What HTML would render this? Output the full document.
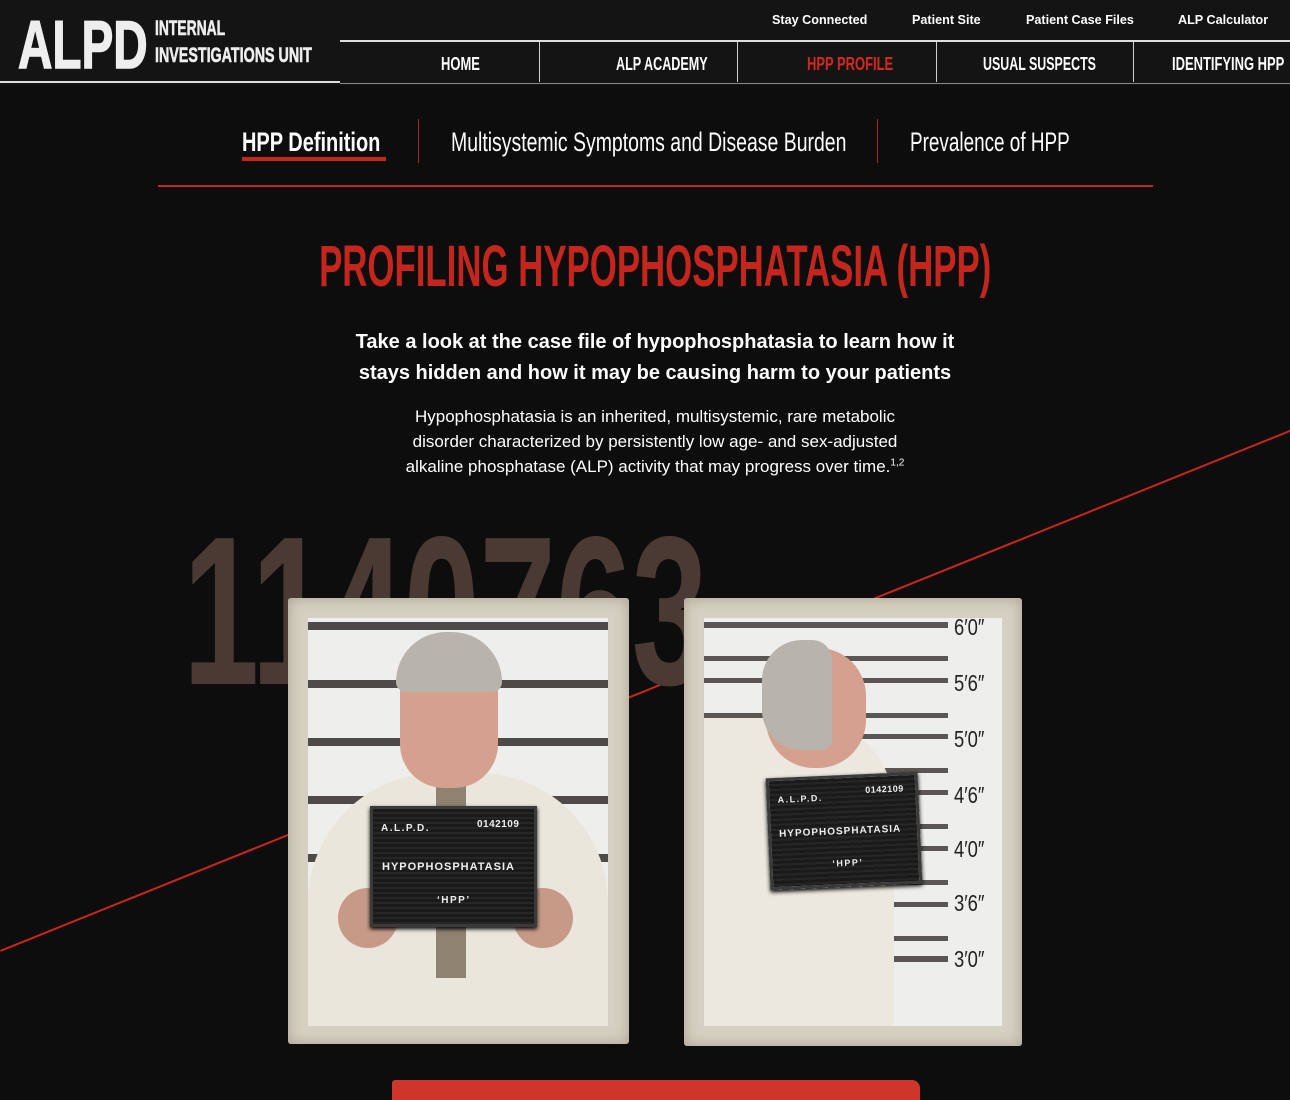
<!DOCTYPE html>
<html><head><meta charset="utf-8"><style>
*{margin:0;padding:0;box-sizing:border-box}
body{width:1290px;height:1090px;overflow:hidden;background:#0d0d0d;font-family:"Liberation Sans",sans-serif;color:#fff;position:relative}
.a{position:absolute;white-space:nowrap}
.s{display:inline-block;transform-origin:left center}
.cc{position:absolute;left:10px;width:1290px;text-align:center;white-space:nowrap}
.cc span{display:inline-block;transform-origin:center}
.nav{font-weight:bold;font-size:18px;top:54px}
.sep{position:absolute;width:1px;background:#cfcfcf}
.frame{position:absolute;background:#d6d0c2;box-shadow:inset 0 0 14px #a9a190;border-radius:3px}
.inner{position:absolute;overflow:hidden;background:#eeeeec}
.sign{position:absolute;background:repeating-linear-gradient(#1a1a1a 0 3px,#262626 3px 5px);border:3px solid #3a3a3a;box-shadow:0 2px 4px #000;color:#eee;font-weight:bold}
.sign div{position:absolute;white-space:nowrap}
.ht{position:absolute;left:250px;font-size:23px;color:#222;transform:scaleX(.8);transform-origin:left}
</style></head><body>
<!-- header -->
<div class="a" style="left:0;top:0;width:1290px;height:85px;background:#141414"></div>
<div class="a" style="left:0;top:81px;width:340px;height:2px;background:#ddd"></div>
<div class="a" style="left:340px;top:40px;width:950px;height:2px;background:#ddd"></div>
<div class="a" style="left:340px;top:83px;width:950px;height:1px;background:#888"></div>
<div class="a" style="left:18px;top:6px;font-size:68px;font-weight:bold;color:#eee;-webkit-text-stroke:1.5px #eee"><span class="s" style="transform:scaleX(.7)">ALPD</span></div>
<div class="a" style="left:155px;top:17px;font-size:21px;font-weight:bold;color:#eee;-webkit-text-stroke:.6px #eee"><span class="s" style="transform:scaleX(.66)">INTERNAL</span></div>
<div class="a" style="left:155px;top:44px;font-size:21px;font-weight:bold;color:#eee;-webkit-text-stroke:.6px #eee"><span class="s" style="transform:scaleX(.68)">INVESTIGATIONS UNIT</span></div>
<div class="a" style="left:772px;top:12px;font-size:13px;font-weight:bold"><span class="s" style="transform:scaleX(.97)">Stay Connected</span></div>
<div class="a" style="left:912px;top:12px;font-size:13px;font-weight:bold"><span class="s" style="transform:scaleX(.97)">Patient Site</span></div>
<div class="a" style="left:1026px;top:12px;font-size:13px;font-weight:bold"><span class="s" style="transform:scaleX(.97)">Patient Case Files</span></div>
<div class="a" style="left:1178px;top:12px;font-size:13px;font-weight:bold"><span class="s" style="transform:scaleX(.97)">ALP Calculator</span></div>
<div class="sep" style="left:539px;top:42px;height:40px"></div>
<div class="sep" style="left:737px;top:42px;height:40px"></div>
<div class="sep" style="left:936px;top:42px;height:40px"></div>
<div class="sep" style="left:1133px;top:42px;height:40px"></div>
<div class="a nav" style="left:441px"><span class="s" style="transform:scaleX(.72)">HOME</span></div>
<div class="a nav" style="left:616px"><span class="s" style="transform:scaleX(.7)">ALP ACADEMY</span></div>
<div class="a nav" style="left:807px;color:#d4281e"><span class="s" style="transform:scaleX(.72)">HPP PROFILE</span></div>
<div class="a nav" style="left:983px"><span class="s" style="transform:scaleX(.69)">USUAL SUSPECTS</span></div>
<div class="a nav" style="left:1172px"><span class="s" style="transform:scaleX(.72)">IDENTIFYING HPP</span></div>
<!-- subnav -->
<div class="a" style="left:242px;top:127px;font-size:27px;font-weight:bold"><span class="s" style="transform:scaleX(.74)">HPP Definition</span></div>
<div class="a" style="left:242px;top:157px;width:144px;height:4px;background:#c8261d"></div>
<div class="sep" style="left:418px;top:119px;height:44px;background:#b3221a"></div>
<div class="a" style="left:451px;top:127px;font-size:27px"><span class="s" style="transform:scaleX(.72)">Multisystemic Symptoms and Disease Burden</span></div>
<div class="sep" style="left:877px;top:119px;height:44px;background:#b3221a"></div>
<div class="a" style="left:910px;top:127px;font-size:27px"><span class="s" style="transform:scaleX(.7)">Prevalence of HPP</span></div>
<div class="a" style="left:158px;top:185px;width:995px;height:2px;background:#c8261d"></div>
<!-- title -->
<div class="cc" style="top:233px;font-size:58px;font-weight:bold;color:#c4261e"><span style="transform:scaleX(.6)">PROFILING HYPOPHOSPHATASIA (HPP)</span></div>
<div class="cc" style="top:331px;font-size:20px;font-weight:bold"><span style="transform:scaleX(1.0)">Take a look at the case file of hypophosphatasia to learn how it</span></div>
<div class="cc" style="top:362px;font-size:20px;font-weight:bold"><span style="transform:scaleX(1.0)">stays hidden and how it may be causing harm to your patients</span></div>
<div class="cc" style="top:407px;font-size:17px"><span style="transform:scaleX(1.0)">Hypophosphatasia is an inherited, multisystemic, rare metabolic</span></div>
<div class="cc" style="top:432px;font-size:17px"><span style="transform:scaleX(1.0)">disorder characterized by persistently low age- and sex-adjusted</span></div>
<div class="cc" style="top:457px;font-size:17px"><span style="transform:scaleX(1.0)">alkaline phosphatase (ALP) activity that may progress over time.<sup style="font-size:10px">1,2</sup></span></div>
<!-- red diagonal -->
<div class="a" style="left:0;top:950px;width:1391px;height:2px;background:#c8261d;transform-origin:0 0;transform:rotate(-21.96deg)"></div>
<!-- big number -->
<div class="a" style="left:183px;top:505px;font-size:212px;font-weight:bold;color:#4a3a33;line-height:1"><span class="s" style="transform:scaleX(.645)">1140763</span></div>
<!-- left photo -->
<div class="frame" style="left:288px;top:598px;width:341px;height:446px"></div>
<div class="inner" style="left:308px;top:618px;width:300px;height:408px;background:repeating-linear-gradient(#eeeeec 0 4px,#4d4a48 4px 12px,#eeeeec 12px 58px)">
 <div class="a" style="left:0;top:155px;width:300px;height:260px;background:#ebe6dc;border-radius:130px 130px 0 0"></div>
 <div class="a" style="left:128px;top:160px;width:30px;height:200px;background:#8f8270"></div>
 <div class="a" style="left:92px;top:20px;width:98px;height:150px;background:#d5a08e;border-radius:48px 48px 44px 44px"></div>
 <div class="a" style="left:88px;top:14px;width:106px;height:60px;background:#b8b4ad;border-radius:50px 50px 10px 10px"></div>
 <div class="a" style="left:30px;top:270px;width:60px;height:60px;background:#c79a87;border-radius:30px"></div>
 <div class="a" style="left:205px;top:270px;width:60px;height:60px;background:#c79a87;border-radius:30px"></div>
</div>
<div class="sign" style="left:370px;top:806px;width:167px;height:121px">
 <div style="left:8px;top:14px;font-size:10px;letter-spacing:1.5px">A.L.P.D.</div>
 <div style="left:104px;top:10px;font-size:10px;letter-spacing:.5px">0142109</div>
 <div style="left:9px;top:52px;font-size:11px;letter-spacing:1px">HYPOPHOSPHATASIA</div>
 <div style="left:64px;top:86px;font-size:10px;letter-spacing:1.5px">‘HPP’</div>
</div>
<!-- right photo -->
<div class="frame" style="left:684px;top:598px;width:338px;height:448px"></div>
<div class="inner" style="left:704px;top:618px;width:298px;height:408px;background:#eeeeec">
 <div class="a" style="left:0;top:4px;width:244px;height:6px;background:#5a5654"></div>
 <div class="a" style="left:0;top:38px;width:244px;height:5px;background:#5a5654"></div>
 <div class="a" style="left:0;top:60px;width:244px;height:5px;background:#5a5654"></div>
 <div class="a" style="left:0;top:95px;width:244px;height:5px;background:#5a5654"></div>
 <div class="a" style="left:0;top:116px;width:244px;height:5px;background:#5a5654"></div>
 <div class="a" style="left:0;top:150px;width:244px;height:5px;background:#5a5654"></div>
 <div class="a" style="left:0;top:172px;width:244px;height:5px;background:#5a5654"></div>
 <div class="a" style="left:0;top:206px;width:244px;height:5px;background:#5a5654"></div>
 <div class="a" style="left:0;top:228px;width:244px;height:5px;background:#5a5654"></div>
 <div class="a" style="left:0;top:262px;width:244px;height:5px;background:#5a5654"></div>
 <div class="a" style="left:0;top:284px;width:244px;height:5px;background:#5a5654"></div>
 <div class="a" style="left:0;top:318px;width:244px;height:5px;background:#5a5654"></div>
 <div class="a" style="left:0;top:338px;width:244px;height:6px;background:#5a5654"></div>
 <div class="a" style="left:0;top:100px;width:190px;height:320px;background:#ece8e0;border-radius:0 90px 0 0"></div>
 <div class="a" style="left:62px;top:30px;width:100px;height:120px;background:#d5a08e;border-radius:48px"></div>
 <div class="a" style="left:58px;top:22px;width:70px;height:110px;background:#b8b4ad;border-radius:40px 20px 10px 40px"></div>
 <div class="ht" style="top:-4px">6′0″</div><div class="ht" style="top:52px">5′6″</div>
 <div class="ht" style="top:108px">5′0″</div><div class="ht" style="top:164px">4′6″</div>
 <div class="ht" style="top:218px">4′0″</div><div class="ht" style="top:272px">3′6″</div>
 <div class="ht" style="top:328px">3′0″</div>
</div>
<div class="sign" style="left:768px;top:775px;width:152px;height:112px;transform:rotate(-2.5deg)">
 <div style="left:8px;top:14px;font-size:9px;letter-spacing:1.5px">A.L.P.D.</div>
 <div style="left:96px;top:8px;font-size:9px;letter-spacing:.5px">0142109</div>
 <div style="left:8px;top:48px;font-size:10px;letter-spacing:1px">HYPOPHOSPHATASIA</div>
 <div style="left:60px;top:80px;font-size:9px;letter-spacing:1.5px">‘HPP’</div>
</div>
<!-- bottom button -->
<div class="a" style="left:392px;top:1080px;width:528px;height:20px;background:#cf352b;border-radius:3px 8px 0 0"></div>
</body></html>
